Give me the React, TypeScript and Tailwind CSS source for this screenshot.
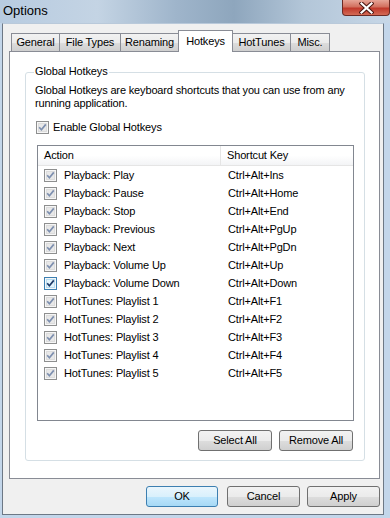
import React from "react";

const rows: [string, string, boolean?][] = [
  ["Playback: Play", "Ctrl+Alt+Ins"],
  ["Playback: Pause", "Ctrl+Alt+Home"],
  ["Playback: Stop", "Ctrl+Alt+End"],
  ["Playback: Previous", "Ctrl+Alt+PgUp"],
  ["Playback: Next", "Ctrl+Alt+PgDn"],
  ["Playback: Volume Up", "Ctrl+Alt+Up"],
  ["Playback: Volume Down", "Ctrl+Alt+Down", true],
  ["HotTunes: Playlist 1", "Ctrl+Alt+F1"],
  ["HotTunes: Playlist 2", "Ctrl+Alt+F2"],
  ["HotTunes: Playlist 3", "Ctrl+Alt+F3"],
  ["HotTunes: Playlist 4", "Ctrl+Alt+F4"],
  ["HotTunes: Playlist 5", "Ctrl+Alt+F5"],
];

const tabs = [
  { label: "General", w: "w-[49px]" },
  { label: "File Types", w: "w-[62px]" },
  { label: "Renaming", w: "w-[59px]" },
  { label: "Hotkeys", w: "w-[55px]", active: true },
  { label: "HotTunes", w: "w-[59px]" },
  { label: "Misc.", w: "w-[40px]" },
];

// win7 style checkbox, "hot" = hovered (blue)
function Check({ hot = false }: { hot?: boolean }) {
  return (
    <svg width="13" height="13" viewBox="0 0 13 13" className="shrink-0">
      <rect x="0.5" y="0.5" width="12" height="12" fill="#f6f6f6" stroke={hot ? "#3c7fb1" : "#8e8f8f"} />
      <rect x="2.5" y="2.5" width="8" height="8" fill={hot ? "#e4f4fc" : "#e8e8e8"} stroke={hot ? "#b5dcf2" : "#dcdcdc"} />
      <path d="M3.2 6.3 L5.4 8.8 L9.8 3.4" fill="none" stroke={hot ? "#1d3a68" : "#7d8faf"} strokeWidth="1.7" />
    </svg>
  );
}

function Button({ label, w, def = false }: { label: string; w: string; def?: boolean }) {
  return (
    <div
      className={`${w} h-[21px] rounded-[3px] border flex items-center justify-center text-black ${
        def
          ? "border-[#3c7fb1] bg-[linear-gradient(180deg,#eaf6fd_0%,#d9f0fc_50%,#bee6fd_51%,#a7d9f5_100%)]"
          : "border-[#707070] bg-[linear-gradient(180deg,#f2f2f2_0%,#ebebeb_50%,#dddddd_51%,#cfcfcf_100%)]"
      }`}
    >
      {label}
    </div>
  );
}

export default function App() {
  return (
    <div className="w-[390px] h-[518px] bg-[#c3d6ea] overflow-hidden relative font-['Liberation_Sans',Arial,sans-serif]">
      {/* Title bar */}
      <div className="h-[23px] flex items-center pl-[3px] pb-[2px] text-[13px] text-black bg-[linear-gradient(90deg,#b7cbe0_0%,#c4d4e4_25%,#9fb5cb_45%,#8ea6bd_60%,#b3c6d8_78%,#c7d7e7_100%)]">
        Options
      </div>
      <div className="absolute top-0 right-0 w-[48px] h-[16px] rounded-b-[4px] border border-t-0 border-[#6b2a24] bg-[linear-gradient(180deg,#e6a597_0%,#d2705f_45%,#c0392b_55%,#d36a55_100%)] flex items-center justify-center">
        <svg width="15" height="12" viewBox="0 0 15 12">
          <path d="M2.5 1.5 L12.5 10.5 M12.5 1.5 L2.5 10.5" stroke="#4a1510" strokeWidth="4.2" strokeLinecap="square" />
          <path d="M2.5 1.5 L12.5 10.5 M12.5 1.5 L2.5 10.5" stroke="#ffffff" strokeWidth="2.2" strokeLinecap="square" />
        </svg>
      </div>

      {/* Client area */}
      <div className="ml-[2px] w-[382px] h-[492px] border border-[#6d7885] border-t-[#b9c9da] bg-[#f0f0f0] text-[11px] tracking-[-0.15px] text-black">
        {/* Tabs */}
        <div className="pl-[8px] pt-[7px] h-[27px] flex items-end">
          {tabs.map((t, i) => (
            <div
              key={t.label}
              className={`${t.w} ${i > 0 ? "-ml-px" : ""} flex items-center justify-center border border-b-0 border-[#898c95] ${
                t.active
                  ? "h-[22px] bg-white relative z-10 -mb-px pb-[1px]"
                  : "h-[18px] bg-[linear-gradient(180deg,#f2f2f2_0%,#ebebeb_50%,#dddddd_51%,#cfcfcf_100%)]"
              }`}
            >
              {t.label}
            </div>
          ))}
        </div>

        {/* Tab panel */}
        <div className="ml-[6px] w-[371px] h-[428px] border border-[#898c95] bg-white pt-[20px] pl-[15px]">
          <div className="relative w-[340px] h-[389px] border border-[#d5dfe5] rounded-[3px]">
            <span className="absolute -top-[8px] left-[8px] px-[1px] bg-white leading-[13px]">Global Hotkeys</span>

            <div className="pl-[9px] pt-[11px] leading-[13px]">
              Global Hotkeys are keyboard shortcuts that you can use from any
              <br />
              running application.
            </div>

            <div className="pl-[10px] mt-[11px] h-[13px] flex items-center gap-[4px]">
              <Check />
              <span>Enable Global Hotkeys</span>
            </div>

            {/* List view */}
            <div className="ml-[11px] mt-[11px] w-[317px] h-[276px] border border-[#828790] bg-white">
              <div className="h-[20px] flex border-b border-[#e5e5e5] bg-[linear-gradient(180deg,#ffffff_0%,#ffffff_50%,#f3f4f6_100%)]">
                <div className="w-[183px] border-r border-[#e5e5e5] pl-[6px] flex items-center">Action</div>
                <div className="pl-[6px] flex items-center">Shortcut Key</div>
              </div>
              {rows.map(([action, key, hot]) => (
                <div key={action} className="h-[18px] flex items-center">
                  <div className="w-[184px] pl-[6px] flex items-center gap-[7px]">
                    <Check hot={!!hot} />
                    <span>{action}</span>
                  </div>
                  <div className="pl-[6px]">{key}</div>
                </div>
              ))}
            </div>

            <div className="mt-[9px] pr-[11px] flex justify-end gap-[7px]">
              <Button label="Select All" w="w-[74px]" />
              <Button label="Remove All" w="w-[74px]" />
            </div>
          </div>
        </div>

        {/* Dialog buttons */}
        <div className="mt-[7px] pl-[143px] flex">
          <Button label="OK" w="w-[72px]" def />
          <div className="ml-[9px]">
            <Button label="Cancel" w="w-[73px]" />
          </div>
          <div className="ml-[7px]">
            <Button label="Apply" w="w-[73px]" />
          </div>
        </div>
      </div>
    </div>
  );
}
